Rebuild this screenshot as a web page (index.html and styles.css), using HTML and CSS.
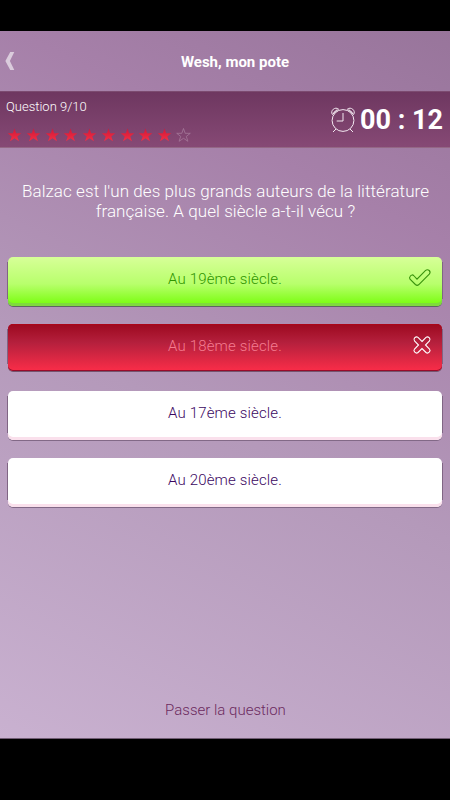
FILE: index.html
```html
<!DOCTYPE html>
<html lang="fr">
<head>
<meta charset="utf-8">
<title>Wesh, mon pote</title>
<link rel="stylesheet" href="styles.css">
</head>
<body>
<svg class="defs" width="0" height="0" aria-hidden="true">
  <defs>
    <linearGradient id="red" x1="0" y1="0" x2="0" y2="1"><stop offset="0" stop-color="#cf1838"/><stop offset="1" stop-color="#f43045"/></linearGradient>
    <path id="star" d="M7.5 .5 L9.2 5.3 H14.3 L10.3 8.4 L11.9 13.3 L7.5 10.3 L3.1 13.3 L4.7 8.4 L.7 5.3 H5.8 Z"/>
  </defs>
</svg>
<main class="screen">
  <header class="topbar">
    <svg class="back" width="10" height="20" viewBox="0 0 10 20"><path d="M5.2 1 H9.3 L4.9 10 L9.3 19 H5.2 L.4 10 Z"/></svg>
    <h1 class="title">Wesh, mon pote</h1>
  </header>
  <section class="status">
    <div class="progress">
      <div class="count">Question 9/10</div>
      <div class="stars">
        <svg class="star" viewBox="0 0 15 14"><use href="#star"/></svg>
        <svg class="star" viewBox="0 0 15 14"><use href="#star"/></svg>
        <svg class="star" viewBox="0 0 15 14"><use href="#star"/></svg>
        <svg class="star" viewBox="0 0 15 14"><use href="#star"/></svg>
        <svg class="star" viewBox="0 0 15 14"><use href="#star"/></svg>
        <svg class="star" viewBox="0 0 15 14"><use href="#star"/></svg>
        <svg class="star" viewBox="0 0 15 14"><use href="#star"/></svg>
        <svg class="star" viewBox="0 0 15 14"><use href="#star"/></svg>
        <svg class="star" viewBox="0 0 15 14"><use href="#star"/></svg>
        <svg class="star empty" viewBox="0 0 15 14"><use href="#star"/></svg>
      </div>
    </div>
    <div class="timer">
      <svg class="clock" width="26" height="26" viewBox="0 0 26 26">
        <circle cx="13" cy="13.5" r="10.9"/>
        <path d="M13 6 V14 H6.7"/>
        <path d="M2.4 7.5 C-.2 3.5 5.3 -.8 8.6 2.2 Z M3.4 5.7 L7.2 2.7"/>
        <path d="M23.6 7.5 C26.2 3.5 20.7 -.8 17.4 2.2 Z M22.6 5.7 L18.8 2.7"/>
        <path d="M6 22 L3 25 M20 22 L23 25"/>
      </svg>
      <span class="time">00 : 12</span>
    </div>
  </section>
  <p class="question">Balzac est l'un des plus grands auteurs de la littérature<br>française. A quel siècle a-t-il vécu ?</p>
  <div class="answers">
    <div class="answer good">Au 19ème siècle.
      <svg class="mark" width="24" height="20" viewBox="0 0 24 20"><path d="M2.2 8.3 Q4 5.7 6.1 8 L9 11.1 L17.6 2.4 Q19.5 1 21.2 2.5 Q22.9 4.3 21.3 6.2 L10.6 16.8 Q9 18 7.4 16.5 L2 11.2 Q1 9.7 2.2 8.3 Z"/></svg>
    </div>
    <div class="answer bad">Au 18ème siècle.
      <svg class="mark" width="20" height="20" viewBox="0 0 20 20"><path d="M10 6.5 L14 2.4 Q15.6 1.2 17.2 2.7 Q18.8 4.4 17.5 6 L13.5 10 L17.5 14 Q18.8 15.6 17.2 17.2 Q15.6 18.8 14 17.5 L10 13.5 L6 17.5 Q4.4 18.8 2.8 17.2 Q1.2 15.6 2.5 14 L6.5 10 L2.5 6 Q1.2 4.4 2.8 2.7 Q4.4 1.2 6 2.4 Z"/></svg>
    </div>
    <div class="answer">Au 17ème siècle.</div>
    <div class="answer">Au 20ème siècle.</div>
  </div>
  <div class="skip">Passer la question</div>
</main>
</body>
</html>
```
FILE: styles.css
```css
* { box-sizing: border-box; }
body {
  margin: 0;
  padding: 31px 0 61px;
  height: 800px;
  background: #000;
  font-family: Roboto, "Liberation Sans", sans-serif;
  font-weight: 300;
  color: #fff;
}
.defs { display: block; position: absolute; }
.screen {
  height: 708px;
  display: flex;
  flex-direction: column;
  background: linear-gradient(206deg, #98759b 0%, #a680a9 23%, #b499ba 55%, #c9b1d0 100%);
  border-bottom: 1px solid #715d74;
}
.topbar {
  height: 60px;
  flex: none;
  display: flex;
  align-items: center;
  padding: 0 0 0 5px;
}
.back { fill: #dacbdc; }
.title {
  flex: 1;
  margin: 1px 0 0;
  padding-left: 5px;
  text-align: center;
  font-size: 15px;
  font-weight: 700;
}
.status {
  height: 57px;
  flex: none;
  display: flex;
  justify-content: space-between;
  padding: 0 7px 0 6px;
  background: linear-gradient(#6e3760, #864975);
  border-top: 1px solid #7c4b70;
  border-bottom: 1px solid #946785;
}
.count { margin-top: 6px; font-size: 13px; line-height: 18px; }
.stars { display: flex; gap: 3.75px; margin: 12px 0 0 1px; }
.star { width: 15px; height: 14px; fill: url(#red); display: block; }
.empty { fill: none; stroke: #a77c9c; stroke-width: .75; }
.timer { display: flex; align-items: center; gap: 4px; }
.clock { fill: none; stroke: #f3e8f1; stroke-width: 1; }
.time { font-size: 27px; font-weight: 700; line-height: 34px; margin-top: 1px; }
.question {
  margin: 33px 0 0;
  padding-left: 1px;
  text-align: center;
  font-size: 17px;
  letter-spacing: .07px;
  line-height: 20px;
  white-space: nowrap;
}
.answers {
  display: grid;
  grid-auto-rows: 49px;
  row-gap: 18.2px;
  margin: 35.6px 8px 0;
}
.answer {
  position: relative;
  border-radius: 5px;
  background: #fff;
  color: #3b075f;
  font-size: 15px;
  letter-spacing: .15px;
  line-height: 44px;
  text-align: center;
  box-shadow: inset 0 -3px #fae0ec, 0 1px #826987;
}
.answer::before, .answer::after {
  content: "";
  position: absolute;
  top: 5px;
  bottom: 7px;
  width: 1px;
  background: #806584;
}
.answer::before { left: -1px; }
.answer::after { right: -1px; }
.good {
  background: linear-gradient(#d7ff98, #b8ff6c 55%, #7efd16 94%);
  color: #2f9500;
  box-shadow: inset 0 -3px #7fda3d, 0 1px #5d6562;
}
.bad {
  height: 47px;
  background: linear-gradient(#9c091f, #b5203d 40%, #fa2d48);
  color: #f47c90;
  box-shadow: inset 0 -1px #990b2a, inset 0 1px #ab0618, 0 1px #75546f;
}
.mark { position: absolute; fill: none; stroke-width: 1.1; }
.good .mark { right: 10px; top: 11.5px; stroke: #38920b; }
.bad .mark { right: 10px; top: 11px; stroke: #fff; }
.skip {
  margin: auto 0 18px;
  padding-left: 1px;
  text-align: center;
  font-size: 15px;
  line-height: 20px;
  color: #6c2b5f;
}
```
